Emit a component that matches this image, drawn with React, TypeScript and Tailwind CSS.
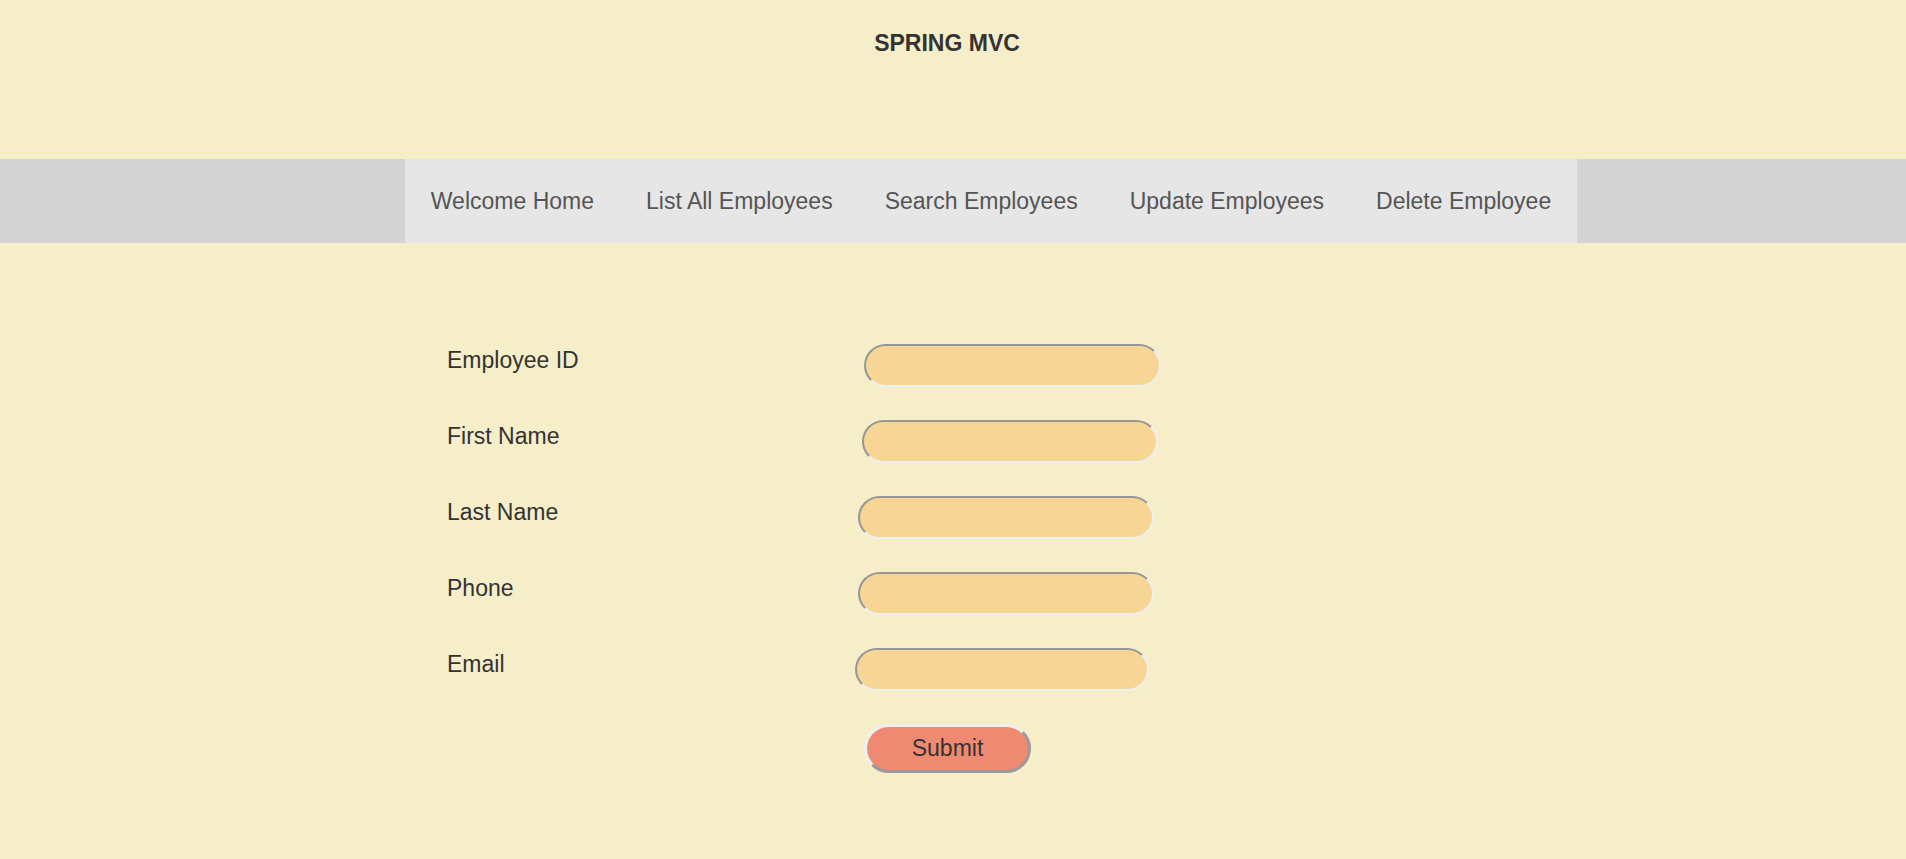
import React from "react";

const navItems = [
  "Welcome Home",
  "List All Employees",
  "Search Employees",
  "Update Employees",
  "Delete Employee",
];

const fields = [
  { label: "Employee ID", name: "id", inputClass: "ml-[417px] w-[297px]" },
  { label: "First Name", name: "firstName", inputClass: "ml-[415px] w-[296px]" },
  { label: "Last Name", name: "lastName", inputClass: "ml-[411px] w-[296px]" },
  { label: "Phone", name: "phone", inputClass: "ml-[411px] w-[296px]" },
  { label: "Email", name: "email", inputClass: "ml-[408px] w-[294px]" },
];

export default function App() {
  return (
    <div className="min-h-screen bg-[#f6eec8] font-['Liberation_Sans',Arial,sans-serif] text-[#333333]">
      {/* header */}
      <div className="h-[159px] pt-[30px] pr-[12px] text-center">
        <h1 className="text-[23px] leading-[27px] font-bold">SPRING MVC</h1>
      </div>

      {/* nav */}
      <nav className="h-[84px] bg-[#d3d3d3] flex justify-center pl-[76px]">
        <ul className="flex bg-[#e6e6e6] h-full">
          {navItems.map((item) => (
            <li
              key={item}
              className="flex items-center px-[26px] pt-[1px] text-[23px] leading-[27px] text-[#555555] cursor-pointer"
            >
              {item}
            </li>
          ))}
        </ul>
      </nav>

      {/* form */}
      <form className="pt-[101px] pl-[447px]" onSubmit={(e) => e.preventDefault()}>
        {fields.map((f) => (
          <div key={f.name} className="flex items-start h-[76px]">
            <label
              htmlFor={f.name}
              className="w-0 whitespace-nowrap mt-[3px] text-[23px] leading-[27px]"
            >
              {f.label}
            </label>
            <input
              id={f.name}
              type="text"
              className={
                "h-[43px] rounded-full bg-[#f7d594] border-2 border-t-[#969696] border-l-[#969696] border-b-[#efefef] border-r-[#efefef] px-4 text-[20px] outline-none " +
                f.inputClass
              }
            />
          </div>
        ))}
        <div className="flex">
          <button
            type="submit"
            className="ml-[417px] w-[167px] h-[49px] rounded-full bg-[#ef8a72] border-[3px] border-t-[#efefef] border-l-[#efefef] border-b-[#9a9a9a] border-r-[#9a9a9a] text-[23px] leading-[27px] text-[#333333]"
          >
            Submit
          </button>
        </div>
      </form>
    </div>
  );
}
